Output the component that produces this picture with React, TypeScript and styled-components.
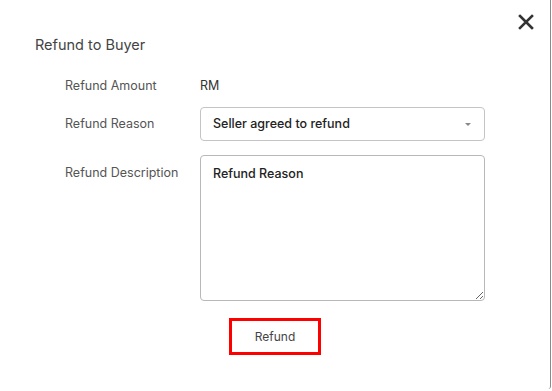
import React from "react";
import styled, { createGlobalStyle } from "styled-components";

const GlobalStyle = createGlobalStyle`
  html, body {
    margin: 0;
    padding: 0;
    background: #ffffff;
  }
  body {
    font-family: Inter, "Open Sans", "Liberation Sans", sans-serif;
  }
`;

const fields = [
  { label: "Refund Amount", kind: "text" },
  { label: "Refund Reason", kind: "select" },
  { label: "Refund Description", kind: "area" },
];

export default function App() {
  return (
    <>
      <GlobalStyle />
      <Modal>
        <Header>
          <Title>Refund to Buyer</Title>
          <CloseButton aria-label="close">
            <svg width="16" height="16" viewBox="0 0 16 16">
              <path
                d="M2 2 L14 14 M14 2 L2 14"
                stroke="#333"
                strokeWidth="2.6"
                strokeLinecap="square"
              />
            </svg>
          </CloseButton>
        </Header>
        <Form>
          {fields.map((f) => (
            <Row key={f.label} $top={f.kind === "area"}>
              <Label $top={f.kind === "area"}>{f.label}</Label>
              {f.kind === "text" && <Amount>RM</Amount>}
              {f.kind === "select" && (
                <Select>
                  <span>Seller agreed to refund</span>
                  <Caret />
                </Select>
              )}
              {f.kind === "area" && (
                <TextArea defaultValue="Refund Reason" />
              )}
            </Row>
          ))}
        </Form>
        <Footer>
          <RefundButton>Refund</RefundButton>
        </Footer>
      </Modal>
    </>
  );
}

const Modal = styled.div`
  width: 551px;
  height: 389px;
  box-sizing: border-box;
  border-right: 1px solid #8a8a8a;
  border-bottom-right-radius: 3px;
  background: #fff;
  position: relative;
`;

const Header = styled.div`
  display: flex;
  align-items: center;
  justify-content: space-between;
  padding: 36px 0 0 35px;
`;

const Title = styled.h2`
  margin: 0;
  font-size: 14.5px;
  font-weight: 400;
  color: #444;
  line-height: 18px;
`;

const CloseButton = styled.button`
  position: absolute;
  top: 14px;
  right: 16px;
  border: 0;
  padding: 0;
  background: none;
  display: flex;
`;

const Form = styled.div`
  display: flex;
  flex-direction: column;
  gap: 14px;
  padding: 25px 0 0 65px;
`;

const Row = styled.div<{ $top?: boolean }>`
  display: flex;
  align-items: ${(p) => (p.$top ? "flex-start" : "center")};
  min-height: 14px;
  line-height: 14px;
`;

const Label = styled.div<{ $top?: boolean }>`
  width: 135px;
  font-size: 12.5px;
  color: #555;
  padding-top: ${(p) => (p.$top ? "11px" : "0")};
`;

const Amount = styled.div`
  font-size: 12.5px;
  color: #333;
`;

const Select = styled.div`
  width: 285px;
  height: 34px;
  box-sizing: border-box;
  border: 1px solid #c4c4c4;
  border-radius: 4px;
  display: flex;
  align-items: center;
  justify-content: space-between;
  padding: 0 13px 0 12px;
  font-size: 12.5px;
  font-weight: 500;
  color: #222;
`;

const Caret = styled.span`
  width: 0;
  height: 0;
  border-left: 3px solid transparent;
  border-right: 3px solid transparent;
  border-top: 3px solid #888;
`;

const TextArea = styled.textarea`
  width: 285px;
  height: 146px;
  box-sizing: border-box;
  border: 1px solid #b8b8b8;
  border-radius: 4px;
  padding: 10px 12px;
  font-family: inherit;
  font-size: 12.5px;
  font-weight: 500;
  color: #222;
  resize: both;
  outline: none;
`;

const Footer = styled.div`
  display: flex;
  padding: 17px 0 0 229px;
`;

const RefundButton = styled.button`
  width: 92px;
  height: 37px;
  box-sizing: border-box;
  border: 3px solid #ff0000;
  background: #fff;
  font-family: inherit;
  font-size: 12px;
  color: #444;
`;
